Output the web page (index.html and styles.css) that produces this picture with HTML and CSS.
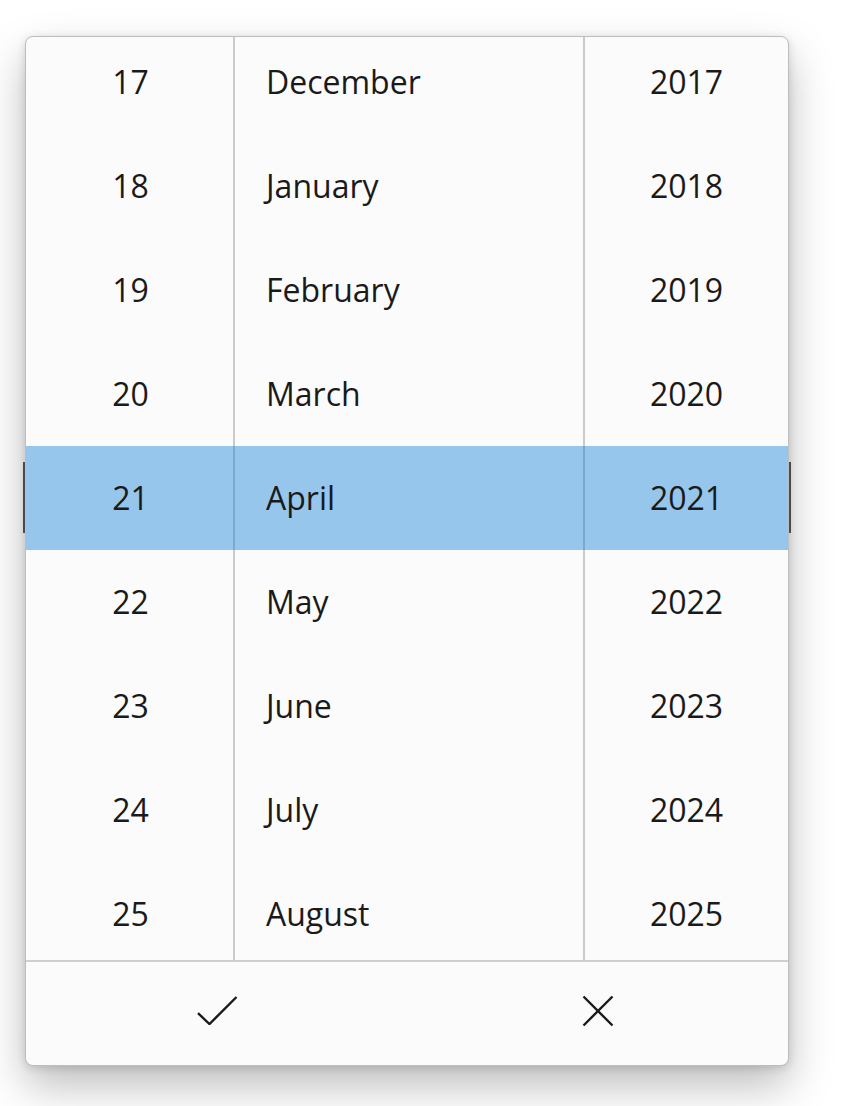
FILE: index.html
```html
<!DOCTYPE html>
<html lang="en">
<head>
<meta charset="utf-8">
<title>Date picker</title>
<link rel="stylesheet" href="styles.css">
</head>
<body>
<div class="popup">
  <div class="list">
    <div class="band"></div>
    <div class="edge edge-left"></div>
    <div class="edge edge-right"></div>
    <div class="col col-day">
      <div class="row">17</div><div class="row">18</div><div class="row">19</div>
      <div class="row">20</div><div class="row">21</div><div class="row">22</div>
      <div class="row">23</div><div class="row">24</div><div class="row">25</div>
    </div>
    <div class="col col-month">
      <div class="row">December</div><div class="row">January</div><div class="row">February</div>
      <div class="row">March</div><div class="row">April</div><div class="row">May</div>
      <div class="row">June</div><div class="row">July</div><div class="row">August</div>
    </div>
    <div class="col col-year">
      <div class="row">2017</div><div class="row">2018</div><div class="row">2019</div>
      <div class="row">2020</div><div class="row">2021</div><div class="row">2022</div>
      <div class="row">2023</div><div class="row">2024</div><div class="row">2025</div>
    </div>
  </div>
  <div class="footer">
    <div class="btn">
      <svg width="41" height="29" viewBox="0 0 41 29"><path d="M1 17.2 L12.5 28 L39.5 1" fill="none" stroke="#1b1b1b" stroke-width="2.4"/></svg>
    </div>
    <div class="btn">
      <svg width="32" height="32" viewBox="0 0 32 32"><path d="M1.5 1.5 L30.5 30.5 M30.5 1.5 L1.5 30.5" fill="none" stroke="#1b1b1b" stroke-width="2.4"/></svg>
    </div>
  </div>
</div>
</body>
</html>
```
FILE: styles.css
```css
html, body {
  margin: 0;
  padding: 0;
  background: #ffffff;
}
body {
  font-family: "Open Sans", "Noto Sans", sans-serif;
  color: #1a1a1a;
  min-height: 1106px;
  padding-top: 36px;
  box-sizing: border-box;
}
.popup {
  margin: 0 0 0 25px;
  width: 764px;
  height: 1030px;
  box-sizing: border-box;
  border: 1px solid #bdbdbd;
  border-radius: 8px;
  background: #fbfbfb;
  box-shadow: 0 20px 44px rgba(0, 0, 0, 0.26), 0 2px 8px rgba(0, 0, 0, 0.14);
  display: flex;
  flex-direction: column;
  position: relative;
}
.list {
  position: relative;
  height: 923px;
  display: grid;
  grid-template-columns: 209px 350px 1fr;
}
.col {
  overflow: hidden;
  display: flex;
  flex-direction: column;
}
.col-day, .col-month {
  border-right: 2px solid #cacaca;
}
.row {
  flex: 0 0 104px;
  height: 104px;
  display: flex;
  align-items: center;
  font-size: 32px;
  position: relative;
  z-index: 1;
}
.row:first-child {
  margin-top: -8px;
}
.col-day .row, .col-year .row {
  justify-content: center;
}
.col-day .row {
  padding-left: 2px;
}
.col-month .row {
  padding-left: 31px;
}
.band {
  position: absolute;
  left: 0;
  right: 0;
  top: 409px;
  height: 104px;
  background: rgba(0, 120, 212, 0.4);
  z-index: 0;
}
.edge {
  position: absolute;
  top: 425px;
  width: 2px;
  height: 71px;
  background: #4a4a4a;
}
.edge-left { left: -3px; }
.edge-right { right: -3px; }
.footer {
  flex: 1;
  border-top: 2px solid #cfcfcf;
  display: grid;
  grid-template-columns: 1fr 1fr;
}
.btn {
  display: flex;
  align-items: center;
  justify-content: center;
  padding-bottom: 6px;
}
.btn:first-child svg {
  margin-left: 2px;
}
```
